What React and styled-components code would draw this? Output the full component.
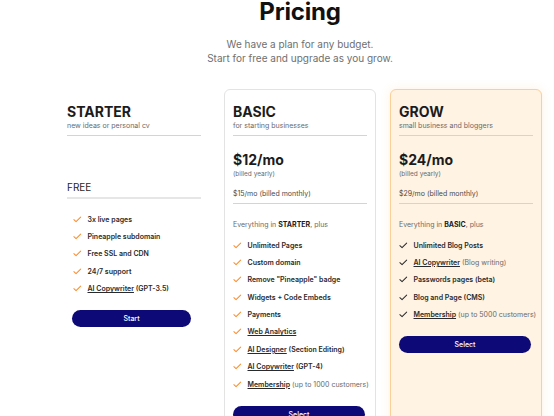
import styled, { createGlobalStyle } from 'styled-components';

const GlobalStyle = createGlobalStyle`
  html, body {
    margin: 0;
    padding: 0;
    overflow: hidden;
    background: #ffffff;
  }
  body {
    font-family: Inter, "Noto Sans", "Liberation Sans", sans-serif;
    color: #1f1f1f;
  }
`;

const plans = [
  {
    name: 'STARTER',
    tagline: 'new ideas or personal cv',
    variant: 'plain',
    button: 'Start',
    features: [
      { label: '3x live pages' },
      { label: 'Pineapple subdomain' },
      { label: 'Free SSL and CDN' },
      { label: '24/7 support' },
      { label: 'AI Copywriter', link: true, extra: '(GPT-3.5)', extraBold: true },
    ],
  },
  {
    name: 'BASIC',
    tagline: 'for starting businesses',
    variant: 'outline',
    price: '$12/mo',
    monthly: '$15/mo (billed monthly)',
    base: 'STARTER',
    button: 'Select',
    features: [
      { label: 'Unlimited Pages' },
      { label: 'Custom domain' },
      { label: 'Remove "Pineapple" badge' },
      { label: 'Widgets + Code Embeds' },
      { label: 'Payments' },
      { label: 'Web Analytics', link: true },
      { label: 'AI Designer', link: true, extra: '(Section Editing)', extraBold: true },
      { label: 'AI Copywriter', link: true, extra: '(GPT-4)', extraBold: true },
      { label: 'Membership', link: true, extra: '(up to 1000 customers)' },
    ],
  },
  {
    name: 'GROW',
    tagline: 'small business and bloggers',
    variant: 'featured',
    price: '$24/mo',
    monthly: '$29/mo (billed monthly)',
    base: 'BASIC',
    button: 'Select',
    features: [
      { label: 'Unlimited Blog Posts' },
      { label: 'AI Copywriter', link: true, extra: '(Blog writing)' },
      { label: 'Passwords pages (beta)' },
      { label: 'Blog and Page (CMS)' },
      { label: 'Membership', link: true, extra: '(up to 5000 customers)' },
    ],
  },
];

function Check({ dark }) {
  return (
    <CheckIcon viewBox="0 0 10 8" aria-hidden="true">
      <path
        d="M1 4.2 L3.6 6.6 L9 1.2"
        fill="none"
        stroke={dark ? '#2b2b2b' : '#fb8c2e'}
        strokeWidth="1.2"
        strokeLinecap="round"
        strokeLinejoin="round"
      />
    </CheckIcon>
  );
}

function PlanCard({ plan }) {
  const featured = plan.variant === 'featured';
  const starter = plan.variant === 'plain';
  return (
    <Card $variant={plan.variant}>
      <PlanName>{plan.name}</PlanName>
      <Tagline>{plan.tagline}</Tagline>
      <Divider />
      {starter ? (
        <>
          <Free>FREE</Free>
          <ThickDivider />
        </>
      ) : (
        <>
          <Price>{plan.price}</Price>
          <Billed>(billed yearly)</Billed>
          <Monthly>{plan.monthly}</Monthly>
          <Divider />
          <Includes>
            Everything in <b>{plan.base}</b>, plus
          </Includes>
        </>
      )}
      <Features $indent={starter}>
        {plan.features.map((f) => (
          <Feature key={f.label + (f.extra || '')}>
            <Check dark={featured} />
            <FeatureText>
              {f.link ? <Link>{f.label}</Link> : f.label}
              {f.extra && <Extra $bold={f.extraBold}> {f.extra}</Extra>}
            </FeatureText>
          </Feature>
        ))}
      </Features>
      <Button $narrow={starter}>{plan.button}</Button>
    </Card>
  );
}

export default function App() {
  return (
    <Page>
      <GlobalStyle />
      <Title>Pricing</Title>
      <Subtitle>
        We have a plan for any budget.
        <br />
        Start for free and upgrade as you grow.
      </Subtitle>
      <Cards>
        {plans.map((p) => (
          <PlanCard key={p.name} plan={p} />
        ))}
      </Cards>
    </Page>
  );
}

const Page = styled.div`
  width: 600px;
`;

const Title = styled.h1`
  margin: 0;
  font-size: 24px;
  line-height: 24px;
  font-weight: 700;
  text-align: center;
  color: #111111;
  letter-spacing: -0.2px;
`;

const Subtitle = styled.p`
  margin: 13px 0 0;
  font-size: 10px;
  line-height: 14px;
  text-align: center;
  color: #6f6f6f;
`;

const Cards = styled.div`
  display: flex;
  justify-content: center;
  align-items: stretch;
  gap: 14px;
  margin-top: 24px;
`;

const Card = styled.div`
  width: 152px;
  box-sizing: border-box;
  padding: 13px 8px 16px;
  border-radius: 6px;
  display: flex;
  flex-direction: column;
  border: 1px solid
    ${(p) =>
      p.$variant === 'featured'
        ? '#fbcf98'
        : p.$variant === 'outline'
        ? '#e3e3e3'
        : 'transparent'};
  background: ${(p) => (p.$variant === 'featured' ? '#fff3e3' : 'transparent')};
  box-shadow: ${(p) =>
    p.$variant === 'featured' ? '0 0 10px rgba(251, 170, 90, 0.18)' : 'none'};
`;

const PlanName = styled.div`
  font-size: 14px;
  line-height: 17px;
  font-weight: 700;
  color: #1c1c1c;
`;

const Tagline = styled.div`
  margin-top: 1px;
  font-size: 7px;
  line-height: 10px;
  color: #6a6a6a;
`;

const Divider = styled.div`
  height: 1px;
  background: #d4d4d4;
  margin-top: 4px;
`;

const ThickDivider = styled.div`
  height: 2px;
  background: #e6e6e6;
  margin-top: 4px;
`;

const Free = styled.div`
  margin-top: 45px;
  font-size: 10px;
  line-height: 12px;
  color: #1f1f1f;
`;

const Price = styled.div`
  margin-top: 15px;
  font-size: 14px;
  line-height: 17px;
  font-weight: 700;
  color: #1c1c1c;
`;

const Billed = styled.div`
  margin-top: 1px;
  font-size: 6.5px;
  line-height: 10px;
  color: #6a6a6a;
`;

const Monthly = styled.div`
  margin-top: 10px;
  font-size: 7px;
  line-height: 10px;
  color: #4a4a4a;
`;

const Includes = styled.div`
  margin-top: 15px;
  font-size: 7px;
  line-height: 11px;
  color: #6a6a6a;

  b {
    color: #1c1c1c;
    font-weight: 700;
  }
`;

const Features = styled.ul`
  list-style: none;
  margin: ${(p) => (p.$indent ? '14.5px 0 0 6px' : '9.5px 0 0')};
  padding: 0;
  display: flex;
  flex-direction: column;
  gap: 6.4px;
`;

const Feature = styled.li`
  display: flex;
  align-items: center;
  gap: 6px;
  height: 11px;
`;

const CheckIcon = styled.svg`
  width: 8.5px;
  height: 7px;
  flex: none;
`;

const FeatureText = styled.span`
  font-size: 7px;
  line-height: 11px;
  font-weight: 600;
  color: #2a2a2a;
  white-space: nowrap;
`;

const Link = styled.span`
  text-decoration: underline;
  text-underline-offset: 1px;
`;

const Extra = styled.span`
  font-weight: ${(p) => (p.$bold ? 600 : 400)};
  color: ${(p) => (p.$bold ? '#2a2a2a' : '#6a6a6a')};
`;

const Button = styled.button`
  margin: 16px ${(p) => (p.$narrow ? '10px 0 5px' : '2px 0 0')};
  height: 17px;
  border: none;
  border-radius: 9px;
  background: #0d0a78;
  color: #ffffff;
  font-family: inherit;
  font-size: 7px;
  font-weight: 500;
  cursor: pointer;
`;
